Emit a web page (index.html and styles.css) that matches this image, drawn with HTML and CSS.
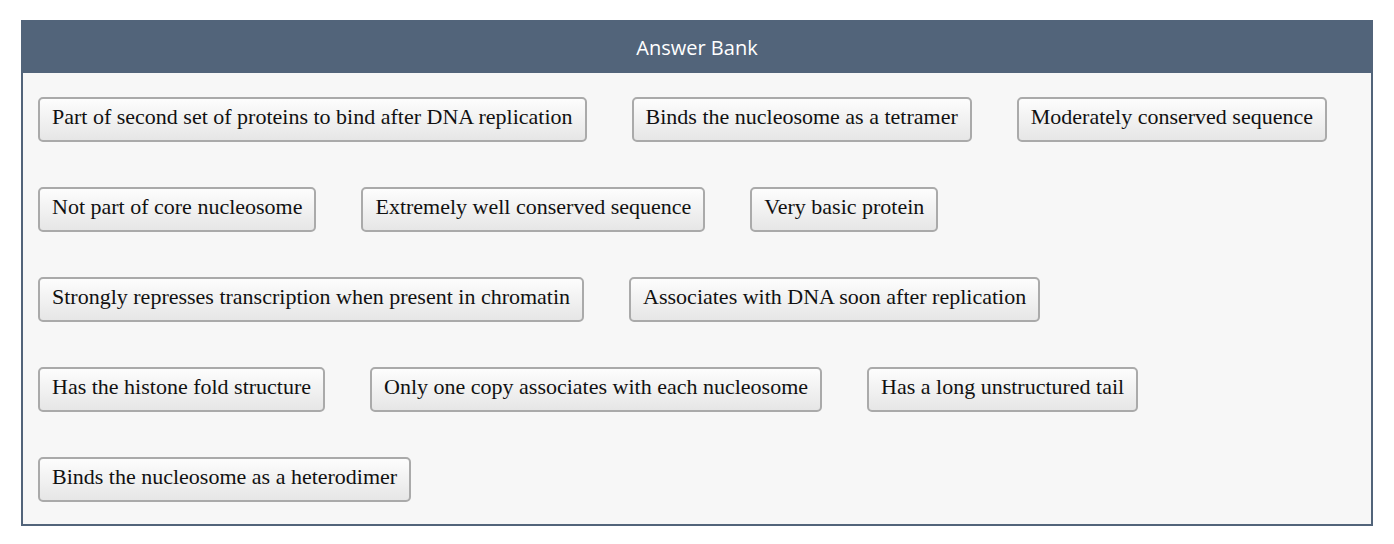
FILE: index.html
```html
<!DOCTYPE html>
<html lang="en">
<head>
    <meta charset="UTF-8">
    <meta name="viewport" content="width=device-width, initial-scale=1.0">
    <title>Answer Bank</title>
    <link rel="stylesheet" href="styles.css">
</head>
<body>
<div class="answer-bank">
    <div class="bank-header">Answer Bank</div>
    <div class="bank-items">
        <button class="chip">Part of second set of proteins to bind after DNA replication</button>
        <button class="chip">Binds the nucleosome as a tetramer</button>
        <button class="chip">Moderately conserved sequence</button>
        <button class="chip">Not part of core nucleosome</button>
        <button class="chip">Extremely well conserved sequence</button>
        <button class="chip">Very basic protein</button>
        <button class="chip">Strongly represses transcription when present in chromatin</button>
        <button class="chip">Associates with DNA soon after replication</button>
        <button class="chip">Has the histone fold structure</button>
        <button class="chip">Only one copy associates with each nucleosome</button>
        <button class="chip">Has a long unstructured tail</button>
        <button class="chip">Binds the nucleosome as a heterodimer</button>
    </div>
</div>
</body>
</html>
```

FILE: styles.css
```css
body {
    margin: 0;
    background-color: #fff;
    font-family: "Liberation Serif", "Times New Roman", serif;
}

.answer-bank {
    margin: 20px 21px;
    border: 2px solid #52647a;
    border-top: none;
    background-color: #f7f7f7;
}

.bank-header {
    background-color: #52647a;
    color: #fff;
    font-family: "Open Sans", sans-serif;
    font-size: 20px;
    text-align: center;
    height: 53px;
    line-height: 55px;
    margin: 0 -2px;
}

/* Контейнер для карточек */
.bank-items {
    display: flex;
    flex-wrap: wrap;
    gap: 45px 45px;
    padding: 24px 15px 22px;
}

.chip {
    font-family: "Liberation Serif", "Times New Roman", serif;
    font-size: 22px;
    line-height: 25px;
    color: #111;
    padding: 5px 12px 11px;
    border: 2px solid #aaa;
    border-radius: 5px;
    background: linear-gradient(to bottom, #fdfdfd, #e6e6e6);
    cursor: pointer;
    height: 45px;
}
```
